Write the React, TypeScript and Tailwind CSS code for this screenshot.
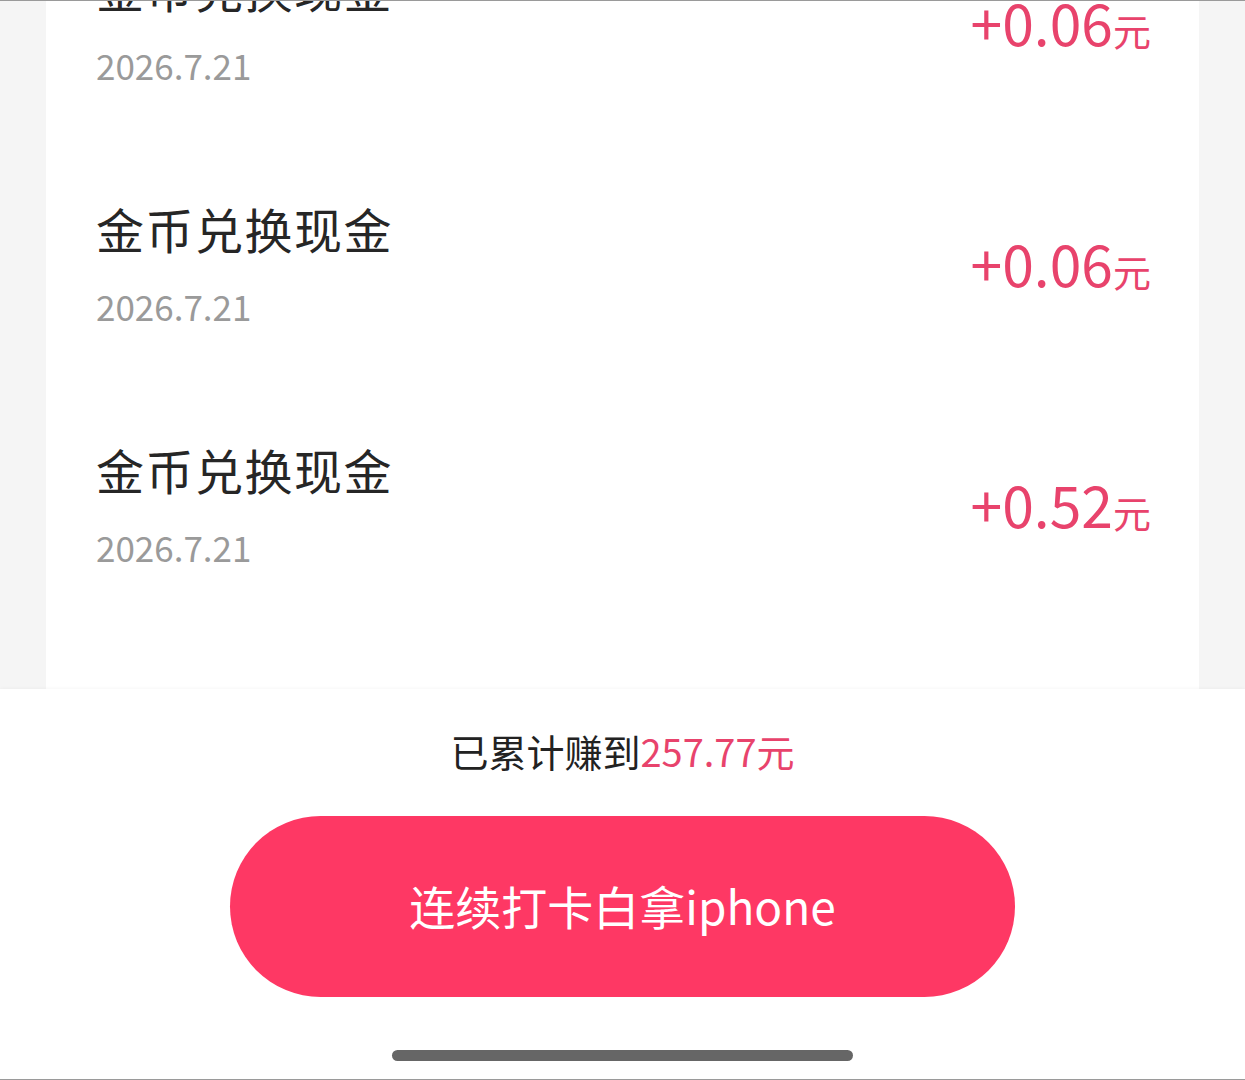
import React from "react";

const rows = [
  { title: "金币兑换现金", date: "2026.7.21", amount: "+0.06" },
  { title: "金币兑换现金", date: "2026.7.21", amount: "+0.06" },
  { title: "金币兑换现金", date: "2026.7.21", amount: "+0.52" },
];

export default function App() {
  return (
    <div
      className="w-[1245px] h-[1080px] overflow-hidden bg-white flex flex-col border-t border-b border-[#9a9a9a]"
      style={{ fontFamily: '"Noto Sans CJK SC", "Noto Sans", sans-serif' }}
    >
      <div className="h-[688px] shrink-0 bg-[#f5f5f5] px-[46px] overflow-hidden">
        <div className="bg-white h-full overflow-hidden">
          <div className="-mt-[101px] flex flex-col">
            {rows.map((r, i) => (
              <div key={i} className="h-[241px] flex items-center justify-between pl-[50px] pr-[48px]">
                <div className="flex flex-col">
                  <div className="text-[48px] leading-[60px] text-[#262626] tracking-[1.5px]">{r.title}</div>
                  <div className="mt-[28px] text-[35px] leading-[40px] text-[#9a9a9a]">{r.date}</div>
                </div>
                <div className="flex items-baseline text-[#e8436c]">
                  <span className="text-[57px] leading-[60px]">{r.amount}</span>
                  <span className="text-[38px] leading-[40px]">元</span>
                </div>
              </div>
            ))}
          </div>
        </div>
      </div>
      <div className="flex-1 flex flex-col items-center shadow-[0_-1px_3px_rgba(0,0,0,0.03)]">
        <div className="mt-[38px] text-[38px] leading-[48px] text-[#222]">
          已累计赚到<span className="text-[#e8436c]">257.77元</span>
        </div>
        <button className="mt-[41px] w-[785px] h-[181px] rounded-full bg-[#fe3864] text-white text-[46px] leading-[60px] flex items-center justify-center pb-[4px]">
          连续打卡白拿iphone
        </button>
        <div className="mt-[53px] w-[461px] h-[11px] rounded-full bg-[#666]" />
      </div>
    </div>
  );
}
